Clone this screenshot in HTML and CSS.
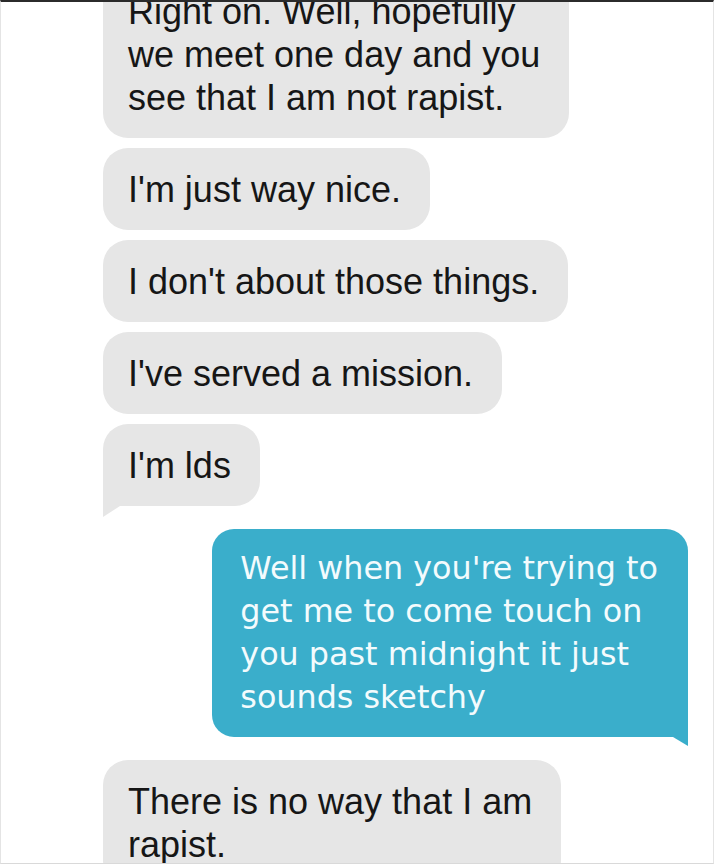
FILE: index.html
```html
<!DOCTYPE html>
<html lang="en">
<head>
    <meta charset="UTF-8">
    <meta name="viewport" content="width=device-width, initial-scale=1.0">
    <title>Messages</title>
    <link rel="stylesheet" href="styles.css">
</head>
<body>
    <div class="screen">
        <div class="thread">
            <div class="group in">
                <div class="bubble">Right on. Well, hopefully<br>we meet one day and you<br>see that I am not rapist.</div>
                <div class="bubble">I'm just way nice.</div>
                <div class="bubble">I don't about those things.</div>
                <div class="bubble">I've served a mission.</div>
                <div class="bubble tail">I'm lds</div>
            </div>

            <div class="group out">
                <div class="bubble tail">Well when you're trying to<br>get me to come touch on<br>you past midnight it just<br>sounds sketchy</div>
            </div>

            <div class="group in">
                <div class="bubble">There is no way that I am<br>rapist.</div>
            </div>
        </div>
    </div>
</body>
</html>
```

FILE: styles.css
```css
/* Reset */
* {
    margin: 0;
    padding: 0;
    box-sizing: border-box;
}

body {
    background-color: #ffffff;
    font-family: "Liberation Sans", Arial, sans-serif;
}

.screen {
    width: 714px;
    height: 864px;
    overflow: hidden;
    border-top: 2px solid #2b2b2b;
    border-left: 1px solid #e4e4e4;
    border-right: 1px solid #e4e4e4;
    border-bottom: 1px solid #d9d9d9;
}

/* scrolled, so the first bubble is cut at the top */
.thread {
    margin-top: -32px;
    padding: 0 25px 0 102px;
    display: flex;
    flex-direction: column;
    gap: 23px;
}

.group {
    display: flex;
    flex-direction: column;
    gap: 10px;
}

.group.in {
    align-items: flex-start;
}

.group.out {
    align-items: flex-end;
}

.bubble {
    position: relative;
    white-space: nowrap;
    border-radius: 25px;
}

.in .bubble {
    background-color: #e6e6e6;
    color: #161616;
    font-size: 36px;
    line-height: 43px;
    padding: 20px 29px 19px 25px;
}

.out .bubble {
    background-color: #3aaecb;
    color: #f3fbfd;
    font-family: "DejaVu Sans", sans-serif;
    font-size: 31.8px;
    line-height: 43px;
    padding: 17px 30px 19px 28px;
    border-radius: 22px;
}

/* little tails on the last bubble of a run */
.in .bubble.tail {
    border-bottom-left-radius: 0;
}

.in .bubble.tail::after {
    content: "";
    position: absolute;
    left: 0;
    bottom: -11px;
    width: 17px;
    height: 11px;
    background-color: #e6e6e6;
    clip-path: polygon(0 0, 100% 0, 0 100%);
}

.out .bubble.tail {
    border-bottom-right-radius: 0;
}

.out .bubble.tail::after {
    content: "";
    position: absolute;
    right: 0;
    bottom: -9px;
    width: 15px;
    height: 9px;
    background-color: #3aaecb;
    clip-path: polygon(0 0, 100% 0, 100% 100%);
}
```
